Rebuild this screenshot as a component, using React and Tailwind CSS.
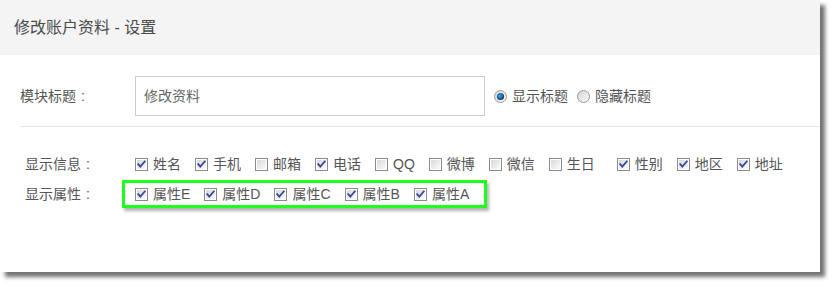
import React from 'react';

const font = { fontFamily: '"Liberation Sans", "Noto Sans CJK SC", sans-serif' };

const Checkbox = ({ checked }) => (
  <svg width="13" height="13" viewBox="0 0 13 13" className="shrink-0">
    <defs>
      <linearGradient id="cbg" x1="0" y1="0" x2="1" y2="1">
        <stop offset="0" stopColor="#d8d8d8" />
        <stop offset="1" stopColor="#fbfbfb" />
      </linearGradient>
    </defs>
    <rect x="0.5" y="0.5" width="12" height="12" fill="#fff" stroke="#8a8a8a" />
    <rect x="2" y="2" width="9" height="9" fill="url(#cbg)" />
    {checked && (
      <path d="M3.2 6.2 L5.3 8.6 L9.8 3.4" fill="none" stroke="#38479a" strokeWidth="1.8" strokeLinecap="square" />
    )}
  </svg>
);

const Radio = ({ checked }) => (
  <svg width="13" height="13" viewBox="0 0 13 13" className="shrink-0">
    <defs>
      <linearGradient id="rbg" x1="0" y1="0" x2="1" y2="1">
        <stop offset="0" stopColor="#d4d4d4" />
        <stop offset="1" stopColor="#fafafa" />
      </linearGradient>
      <radialGradient id="rdot" cx="0.4" cy="0.4" r="0.6">
        <stop offset="0" stopColor="#4aa3e0" />
        <stop offset="0.6" stopColor="#1a6aa8" />
        <stop offset="1" stopColor="#0c3a66" />
      </radialGradient>
    </defs>
    <circle cx="6.5" cy="6.5" r="6" fill="url(#rbg)" stroke="#9a9a9a" />
    {checked && <circle cx="6.5" cy="6.5" r="3.6" fill="url(#rdot)" />}
  </svg>
);

const Check = ({ checked, label, className = '' }) => (
  <label className={`flex items-center gap-[5px] mr-[14px] ${className}`}>
    <Checkbox checked={checked} />
    <span>{label}</span>
  </label>
);

// label with a centred full-width colon, like the original's YaHei
const Label = ({ children, className = '' }) => (
  <div className={`flex items-center ${className}`}>
    <span>{children}</span>
    <span className="w-[14px] text-center">:</span>
  </div>
);

const info = [
  ['姓名', true], ['手机', true], ['邮箱', false], ['电话', true], ['QQ', false],
  ['微博', false], ['微信', false], ['生日', false], ['性别', true], ['地区', true], ['地址', true],
];

const attrs = ['属性E', '属性D', '属性C', '属性B', '属性A'];

export default function App() {
  return (
    <div className="w-[835px] h-[287px] bg-white text-[14px] text-[#555]" style={font}>
      <div className="w-[820px] h-[272px] bg-white shadow-[5px_5px_4px_rgba(0,0,0,0.55)] flex flex-col">
        <div className="h-[55px] bg-[#f4f4f4] flex items-center pl-[14px] text-[16px] text-[#4a4a4a]">
          修改账户资料 - 设置
        </div>

        <div className="pl-[20px] pt-[21px]">
          <div className="flex items-center h-[40px]">
            <Label className="w-[115px]">模块标题</Label>
            <div className="w-[350px] h-[40px] border border-[#cccccc] flex items-center pl-[8px] text-[#666]">
              修改资料
            </div>
            <div className="flex items-center ml-[9px]">
              <Radio checked />
              <span className="ml-[5px] mr-[9px]">显示标题</span>
              <Radio />
              <span className="ml-[5px]">隐藏标题</span>
            </div>
          </div>
          <div className="mt-[10px] border-b border-[#e5e5e5]" />
        </div>

        <div className="pl-[25px] pt-[26px]">
          <div className="flex items-center h-[22px]">
            <Label className="w-[110px]">显示信息</Label>
            {info.map(([l, c]) => (
              <Check key={l} label={l} checked={c} className={l === '性别' ? 'ml-[8px]' : ''} />
            ))}
          </div>
          <div className="flex items-center mt-[5px]">
            <Label className="w-[97px]">显示属性</Label>
            <div className="w-[365px] h-[28px] border-[3px] border-[#1eff1e] shadow-[2px_3px_3px_rgba(0,0,0,0.3)] flex items-center pl-[10px]">
              {attrs.map((a) => (
                <Check key={a} label={a} checked />
              ))}
            </div>
          </div>
        </div>
      </div>
    </div>
  );
}
